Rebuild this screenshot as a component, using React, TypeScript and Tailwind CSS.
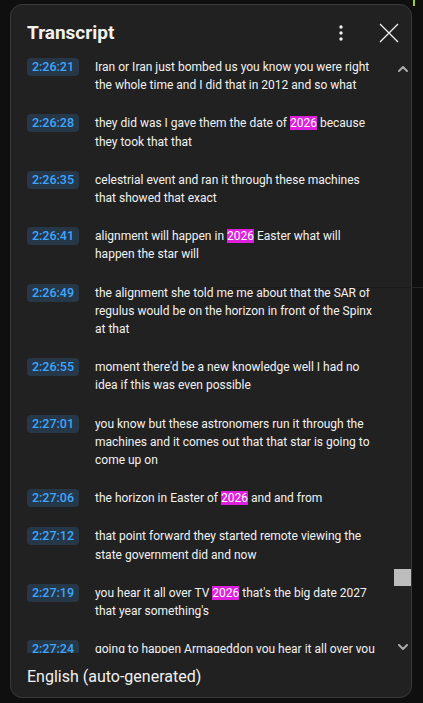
type Segment = {
  time: string
  text: string
}

const segments: Array<Segment> = [
  { time: '2:26:21', text: 'Iran or Iran just bombed us you know you were right the whole time and I did that in 2012 and so what' },
  { time: '2:26:28', text: 'they did was I gave them the date of 2026 because they took that that' },
  { time: '2:26:35', text: 'celestrial event and ran it through these machines that showed that exact' },
  { time: '2:26:41', text: 'alignment will happen in 2026 Easter what will happen the star will' },
  { time: '2:26:49', text: 'the alignment she told me me about that the SAR of regulus would be on the horizon in front of the Spinx at that' },
  { time: '2:26:55', text: "moment there'd be a new knowledge well I had no idea if this was even possible" },
  { time: '2:27:01', text: 'you know but these astronomers run it through the machines and it comes out that that star is going to come up on' },
  { time: '2:27:06', text: 'the horizon in Easter of 2026 and and from' },
  { time: '2:27:12', text: 'that point forward they started remote viewing the state government did and now' },
  { time: '2:27:19', text: "you hear it all over TV 2026 that's the big date 2027 that year something's" },
  { time: '2:27:24', text: 'going to happen Armageddon you hear it all over you' }
]

// highlight every "2026" the way the search match is marked
function renderText(text: string) {
  const parts = text.split(/(2026)/)
  return parts.map((part, i) =>
    part === '2026' ? (
      <span key={i} className="bg-[#de1fde] text-white">
        {part}
      </span>
    ) : (
      <span key={i}>{part}</span>
    )
  )
}

function Chevron({ down = false }: { down?: boolean }) {
  return (
    <svg width="10" height="6" viewBox="0 0 10 6" className="block">
      <path
        d={down ? 'M1 1L5 5L9 1' : 'M1 5L5 1L9 5'}
        fill="none"
        stroke="#aaaaaa"
        strokeWidth="2"
        strokeLinecap="round"
        strokeLinejoin="round"
      />
    </svg>
  )
}

export default function App() {
  return (
    <div
      className="relative h-[703px] w-[423px] overflow-hidden bg-[#0f0f0f] pl-[10px] pt-[4px]"
      style={{ fontFamily: 'Roboto, "Liberation Sans", Arial, sans-serif' }}
    >
      <div className="flex h-[694px] w-[402px] flex-col overflow-hidden rounded-[12px] border border-[#3a3a3a] bg-[#212121]">
        {/* header */}
        <div className="flex h-[43px] shrink-0 items-start pl-[16px] pr-[12px] pt-[14px]">
          <div className="flex-1 text-[19px] font-bold leading-[28px] text-[#f1f1f1]">Transcript</div>
          <div className="flex h-[28px] items-center">
            <svg width="6" height="18" viewBox="0 0 6 18" className="mr-[35px] block">
              <circle cx="3" cy="3" r="1.7" fill="#f1f1f1" />
              <circle cx="3" cy="9" r="1.7" fill="#f1f1f1" />
              <circle cx="3" cy="15" r="1.7" fill="#f1f1f1" />
            </svg>
            <svg width="20" height="20" viewBox="0 0 20 20" className="block">
              <path d="M1 1L19 19M19 1L1 19" stroke="#f1f1f1" strokeWidth="1.3" fill="none" />
            </svg>
          </div>
        </div>

        {/* segments */}
        <div className="flex min-h-0 flex-1">
          <div className="min-w-0 flex-1 overflow-hidden">
            {segments.map((seg) => (
              <div key={seg.time} className="flex items-start py-[10px] pl-[16px]">
                <div className="h-[18px] w-[52px] shrink-0 rounded-[4px] bg-[#263747] text-center text-[12.5px] font-medium leading-[18px] text-[#3ea6ff]">
                  {seg.time}
                </div>
                <div className="ml-[16px] w-[284px] text-[12px] leading-[18.2px] text-[#f1f1f1]">
                  {renderText(seg.text)}
                </div>
              </div>
            ))}
          </div>
          <div className="flex w-[17px] shrink-0 flex-col items-center">
            <div className="pt-[18px]">
              <Chevron />
            </div>
            <div className="flex-1 self-stretch pt-[497px]">
              <div className="h-[17px] w-[17px] bg-[#bdbdbd]" />
            </div>
            <div className="pb-[3px]">
              <Chevron down />
            </div>
          </div>
        </div>

        {/* footer */}
        <div className="flex h-[44px] shrink-0 items-center pl-[16px] pt-[4px] text-[16px] leading-[20px] text-[#f1f1f1]">
          English (auto-generated)
        </div>
      </div>

      {/* bits of the page behind the panel */}
      <div className="absolute left-[227px] top-[287px] h-[1px] w-[184px] bg-[#1a1a1a]" />
      <div className="absolute left-[412px] top-[287px] h-[1px] w-[11px] bg-[#262626]" />
      <div className="absolute left-[413px] top-0 h-[6px] w-[2px] bg-[#9acd32]" />
    </div>
  )
}
